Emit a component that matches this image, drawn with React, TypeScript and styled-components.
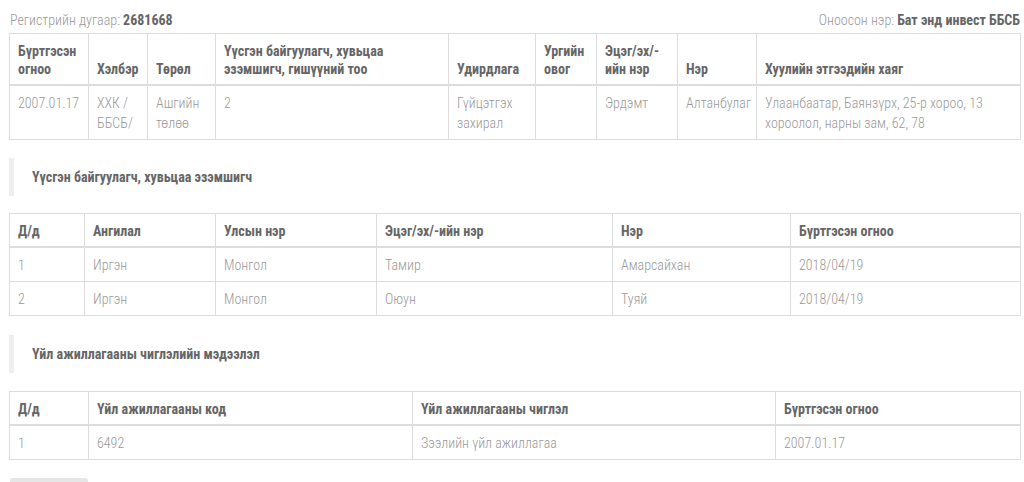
import React from "react";
import styled, { createGlobalStyle } from "styled-components";

const Global = createGlobalStyle`
  html, body { margin: 0; padding: 0; background: #fff; }
  body { font-family: "Roboto Condensed", "Roboto", "Liberation Sans Narrow", sans-serif; font-size: 14px; line-height: 18px; color: #999; }
  * { box-sizing: border-box; }
`;

const Page = styled.div`
  width: 1011px;
  margin-left: 9px;
  padding-top: 11px;
`;

const TopRow = styled.div`
  display: flex;
  justify-content: space-between;
  align-items: center;
  height: 18px;
  margin-bottom: 4px;
  color: #999;
  font-weight: 300;
  padding-left: 1px;
`;

const Strong = styled.b`
  font-weight: 700;
  color: #666;
`;

const Table = styled.table`
  width: 100%;
  border-collapse: collapse;
  table-layout: fixed;
  border: 1px solid #ddd;
`;

const Th = styled.th`
  text-align: left;
  vertical-align: bottom;
  padding: 8px 8px 6px;
  line-height: 18px;
  font-weight: 700;
  color: #666;
  border: 1px solid #ddd;
  border-bottom: 2px solid #ddd;
`;

const Td = styled.td`
  vertical-align: top;
  padding: 7px 8px 6px;
  line-height: 20px;
  font-weight: 300;
  color: #999;
  border: 1px solid #ddd;
`;

const Section = styled.div<{ $mt: number; $mb: number }>`
  margin-top: ${(p) => p.$mt}px;
  margin-bottom: ${(p) => p.$mb}px;
  border-left: 5px solid #eee;
  padding: 10px 18px;
  font-weight: 700;
  color: #666;
`;

const Button = styled.button`
  display: block;
  margin-top: 18px;
  margin-left: 1px;
  width: 78px;
  height: 34px;
  background: #e6e6e6;
  border: none;
  border-radius: 3px;
  font-family: inherit;
`;

type Col = number[];

const Cols = ({ widths }: { widths: Col }) => (
  <colgroup>
    {widths.map((w, i) => (
      <col key={i} style={{ width: w }} />
    ))}
  </colgroup>
);

const t1Widths = [79, 59, 68, 233, 87, 61, 81, 79, 264];
const t1Head = [
  "Бүртгэсэн огноо",
  "Хэлбэр",
  "Төрөл",
  "Үүсгэн байгуулагч, хувьцаа эзэмшигч, гишүүний тоо",
  "Удирдлага",
  "Ургийн овог",
  "Эцэг/эх/-ийн нэр",
  "Нэр",
  "Хуулийн этгээдийн хаяг",
];
const t1Row = [
  "2007.01.17",
  "ХХК / ББСБ/",
  "Ашгийн төлөө",
  "2",
  "Гүйцэтгэх захирал",
  "",
  "Эрдэмт",
  "Алтанбулаг",
  "Улаанбаатар, Баянзүрх, 25-р хороо, 13 хороолол, нарны зам, 62, 78",
];

const t2Widths = [75, 131, 161, 236, 178, 230];
const t2Head = ["Д/д", "Ангилал", "Улсын нэр", "Эцэг/эх/-ийн нэр", "Нэр", "Бүртгэсэн огноо"];
const t2Rows = [
  ["1", "Иргэн", "Монгол", "Тамир", "Амарсайхан", "2018/04/19"],
  ["2", "Иргэн", "Монгол", "Оюун", "Туяй", "2018/04/19"],
];

const t3Widths = [79, 324, 363, 245];
const t3Head = ["Д/д", "Үйл ажиллагааны код", "Үйл ажиллагааны чиглэл", "Бүртгэсэн огноо"];
const t3Rows = [["1", "6492", "Зээлийн үйл ажиллагаа", "2007.01.17"]];

const DataTable = ({ widths, head, rows }: { widths: Col; head: string[]; rows: string[][] }) => (
  <Table>
    <Cols widths={widths} />
    <thead>
      <tr>
        {head.map((h, i) => (
          <Th key={i}>{h}</Th>
        ))}
      </tr>
    </thead>
    <tbody>
      {rows.map((r, i) => (
        <tr key={i}>
          {r.map((c, j) => (
            <Td key={j}>{c}</Td>
          ))}
        </tr>
      ))}
    </tbody>
  </Table>
);

export default function App() {
  return (
    <>
      <Global />
      <Page>
        <TopRow>
          <span>
            Регистрийн дугаар: <Strong>2681668</Strong>
          </span>
          <span>
            Оноосон нэр: <Strong>Бат энд инвест ББСБ</Strong>
          </span>
        </TopRow>
        <DataTable widths={t1Widths} head={t1Head} rows={[t1Row]} />
        <Section $mt={18} $mb={17}>Үүсгэн байгуулагч, хувьцаа эзэмшигч</Section>
        <DataTable widths={t2Widths} head={t2Head} rows={t2Rows} />
        <Section $mt={19} $mb={18}>Үйл ажиллагааны чиглэлийн мэдээлэл</Section>
        <DataTable widths={t3Widths} head={t3Head} rows={t3Rows} />
        <Button>&nbsp;</Button>
      </Page>
    </>
  );
}
